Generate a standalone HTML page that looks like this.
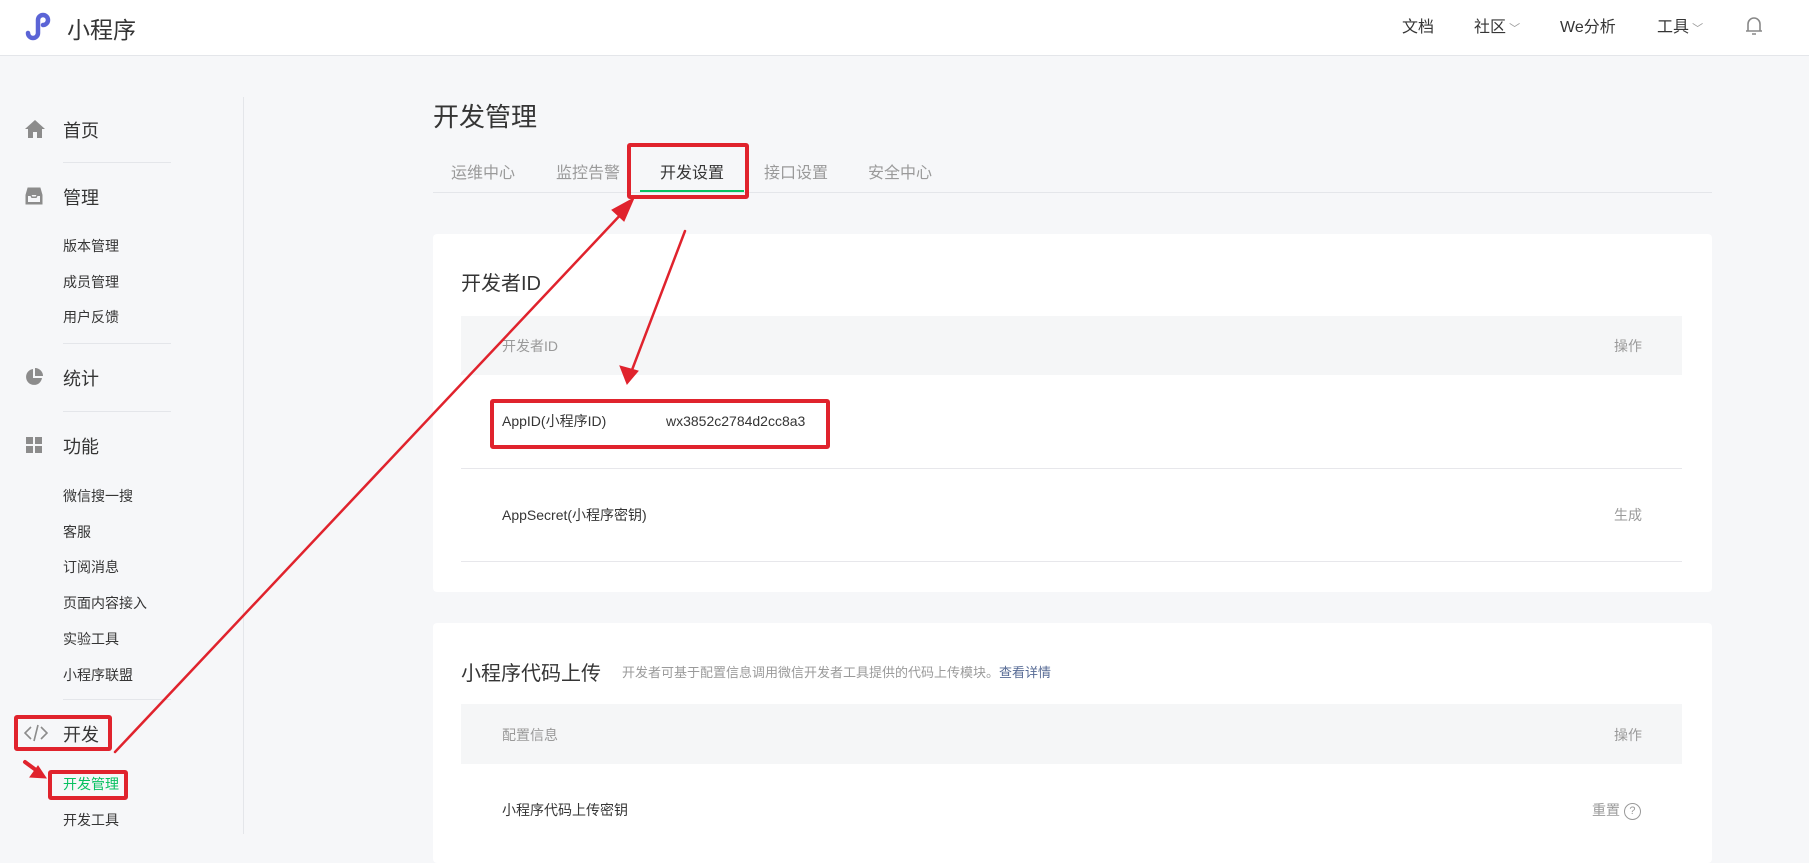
<!DOCTYPE html>
<html><head><meta charset="utf-8"><style>
*{margin:0;padding:0;box-sizing:border-box}
body{width:1809px;height:834px;overflow:hidden;background:#f6f7f9;font-family:"Liberation Sans","Noto Sans CJK SC",sans-serif;color:#353535;position:relative}
.a{position:absolute;white-space:nowrap}
.hdr{position:absolute;left:0;top:0;width:1809px;height:56px;background:#fff;border-bottom:1px solid #e4e6ea}
.nav{font-size:16px;color:#353535;top:13px}
.side1{font-size:18px;color:#353535;left:63px}
.side2{font-size:14px;color:#353535;left:63px}
.sep{position:absolute;left:63px;width:108px;height:1px;background:#e4e6ea}
.tab{font-size:16px;color:#9a9a9a;top:159px}
.card{position:absolute;left:433px;width:1279px;background:#fff;border-radius:4px}
.th{position:absolute;left:461px;width:1221px;background:#f5f6f7}
.t14{font-size:14px;color:#353535;line-height:20px}
.g{color:#9a9a9a}
.hl{position:absolute;left:461px;width:1221px;height:1px;background:#e7e7eb}
.rb{position:absolute;border:4px solid #e0232d;border-radius:3px}
</style></head><body>
<div class="hdr"></div>
<svg class="a" style="left:24px;top:11px" width="30" height="30" viewBox="0 0 30 30"><path d="M4 22 a5 5 0 1 0 10 0 V9 a5 5 0 1 1 5 5" fill="none" stroke="#5b64d6" stroke-width="4.5" stroke-linecap="round"/></svg>
<div class="a" style="left:67px;top:11px;font-size:23px;color:#353535">小程序</div>
<div class="a nav" style="left:1402px">文档</div>
<div class="a nav" style="left:1474px">社区<span style="font-size:11px;color:#999"> ﹀</span></div>
<div class="a nav" style="left:1560px">We分析</div>
<div class="a nav" style="left:1657px">工具<span style="font-size:11px;color:#999"> ﹀</span></div>
<svg class="a" style="left:1744px;top:15px" width="20" height="22" viewBox="0 0 20 22"><path d="M4 16 V9 a6 6 0 0 1 12 0 V16 H2 H18 M8 19 h4" fill="none" stroke="#888" stroke-width="1.6"/></svg>

<div class="a" style="left:243px;top:97px;width:1px;height:737px;background:#e4e6ea"></div>
<svg class="a" style="left:25px;top:120px" width="20" height="18" viewBox="0 0 20 18"><path d="M10 0 L20 9 H17 V18 H12 V12 H8 V18 H3 V9 H0Z" fill="#8c8c8c"/></svg>
<div class="a side1" style="top:117px">首页</div>
<div class="sep" style="top:162px"></div>
<svg class="a" style="left:25px;top:187px" width="18" height="18" viewBox="0 0 18 18"><path d="M1 8 L3 1 H15 L17 8 V17 H1Z M2 8 H6 L7 10 H11 L12 8 H16" fill="#8c8c8c" stroke="#8c8c8c"/><path d="M3 9 H5.5 L6.5 11 H11.5 L12.5 9 H15 V15 H3Z" fill="#f6f7f9"/></svg>
<div class="a side1" style="top:184px">管理</div>
<div class="a side2" style="top:236px">版本管理</div>
<div class="a side2" style="top:272px">成员管理</div>
<div class="a side2" style="top:307px">用户反馈</div>
<div class="sep" style="top:343px"></div>
<svg class="a" style="left:25px;top:368px" width="18" height="18" viewBox="0 0 18 18"><path d="M8 1 A8 8 0 1 0 17 10 H8Z" fill="#8c8c8c"/><path d="M10 0 A8 8 0 0 1 18 8 H10Z" fill="#8c8c8c"/></svg>
<div class="a side1" style="top:365px">统计</div>
<div class="sep" style="top:411px"></div>
<svg class="a" style="left:26px;top:437px" width="16" height="16" viewBox="0 0 16 16"><rect width="7" height="7" fill="#8c8c8c"/><rect x="9" width="7" height="7" fill="#8c8c8c"/><rect y="9" width="7" height="7" fill="#8c8c8c"/><rect x="9" y="9" width="7" height="7" fill="#8c8c8c"/></svg>
<div class="a side1" style="top:433px">功能</div>
<div class="a side2" style="top:486px">微信搜一搜</div>
<div class="a side2" style="top:522px">客服</div>
<div class="a side2" style="top:557px">订阅消息</div>
<div class="a side2" style="top:593px">页面内容接入</div>
<div class="a side2" style="top:629px">实验工具</div>
<div class="a side2" style="top:665px">小程序联盟</div>
<div class="sep" style="top:699px"></div>
<svg class="a" style="left:24px;top:724px" width="24" height="18" viewBox="0 0 24 18"><path d="M7 3 L1 9 L7 15 M17 3 L23 9 L17 15 M14 1 L10 17" fill="none" stroke="#8c8c8c" stroke-width="1.6"/></svg>
<div class="a side1" style="top:721px">开发</div>
<div class="a side2" style="top:774px;color:#07c160">开发管理</div>
<div class="a side2" style="top:810px">开发工具</div>

<div class="a" style="left:433px;top:97px;font-size:26px;color:#353535">开发管理</div>
<div class="a tab" style="left:451px">运维中心</div>
<div class="a tab" style="left:556px">监控告警</div>
<div class="a tab" style="left:660px;color:#353535">开发设置</div>
<div class="a tab" style="left:764px">接口设置</div>
<div class="a tab" style="left:868px">安全中心</div>
<div class="a" style="left:433px;top:192px;width:1279px;height:1px;background:#e4e6ea"></div>
<div class="a" style="left:640px;top:190px;width:104px;height:2px;background:#07c160"></div>

<div class="card" style="top:234px;height:358px"></div>
<div class="a" style="left:461px;top:267px;font-size:20px">开发者ID</div>
<div class="th" style="top:316px;height:59px"></div>
<div class="a t14 g" style="left:502px;top:336px">开发者ID</div>
<div class="a t14 g" style="left:1614px;top:336px">操作</div>
<div class="a t14" style="left:502px;top:411px">AppID(小程序ID)</div>
<div class="a t14" style="left:666px;top:411px">wx3852c2784d2cc8a3</div>
<div class="hl" style="top:468px"></div>
<div class="a t14" style="left:502px;top:505px">AppSecret(小程序密钥)</div>
<div class="a t14 g" style="left:1614px;top:505px">生成</div>
<div class="hl" style="top:561px"></div>

<div class="card" style="top:623px;height:240px"></div>
<div class="a" style="left:461px;top:657px;font-size:20px">小程序代码上传</div>
<div class="a" style="left:622px;top:662px;font-size:13px;color:#9a9a9a">开发者可基于配置信息调用微信开发者工具提供的代码上传模块。<span style="color:#576b95">查看详情</span></div>
<div class="th" style="top:704px;height:60px"></div>
<div class="a t14 g" style="left:502px;top:725px">配置信息</div>
<div class="a t14 g" style="left:1614px;top:725px">操作</div>
<div class="a t14" style="left:502px;top:800px">小程序代码上传密钥</div>
<div class="a t14 g" style="left:1592px;top:800px">重置 <span style="display:inline-block;width:17px;height:17px;border:1px solid #999;border-radius:50%;font-size:11px;text-align:center;line-height:15px;vertical-align:middle">?</span></div>

<div class="rb" style="left:14px;top:715px;width:98px;height:36px"></div>
<div class="rb" style="left:48px;top:770px;width:80px;height:30px"></div>
<div class="rb" style="left:627px;top:143px;width:122px;height:56px"></div>
<div class="rb" style="left:490px;top:399px;width:340px;height:50px"></div>
<svg class="a" style="left:0;top:0" width="1809" height="834" viewBox="0 0 1809 834">
<g stroke="#e0232d" fill="#e0232d" stroke-linecap="round">
<line x1="115" y1="752" x2="625" y2="210" stroke-width="2.5"/>
<polygon points="634,198 612,210 624,221" />
<line x1="685" y1="231" x2="632" y2="370" stroke-width="2.5"/>
<polygon points="627,384 620,366 638,371"/>
<line x1="25" y1="762" x2="40" y2="773" stroke-width="4"/>
<polygon points="46,778 30,777 38,766"/>
</g></svg>
</body></html>
